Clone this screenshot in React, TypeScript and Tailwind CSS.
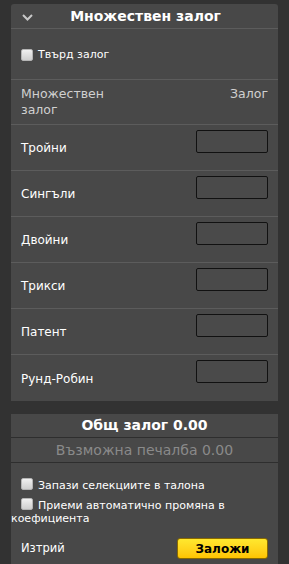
import React from 'react'

const font = { fontFamily: '"DejaVu Sans", Verdana, sans-serif' }

const rows = ['Тройни', 'Сингъли', 'Двойни', 'Трикси', 'Патент', 'Рунд-Робин']

function Box() {
  return (
    <span className="inline-block h-[12px] w-[12px] shrink-0 rounded-[2px] border border-[#b5b5b5] bg-gradient-to-b from-[#f0f0f0] to-[#cfcfcf] align-[-1px]" />
  )
}

export default function App() {
  return (
    <div className="min-h-[564px] bg-[#323232] pt-[4px] pl-[11px]" style={font}>
      {/* Multiple bet panel */}
      <div className="w-[267px] rounded-t-[3px] bg-[#484848]">
        <div className="relative flex h-[25px] items-center justify-center border-b border-[#5c5c5c]">
          <svg
            className="absolute left-[11px] top-[10px]"
            width="11"
            height="7"
            viewBox="0 0 11 7"
            fill="none"
            stroke="#c8c8c8"
            strokeWidth="2"
          >
            <path d="M1 1l4.5 4.5L10 1" />
          </svg>
          <span className="ml-[2px] text-[14px] font-bold leading-none text-white">Множествен залог</span>
        </div>

        <div className="flex h-[51px] items-center gap-[5px] border-b border-[#5c5c5c] pl-[10px] pt-[2px]">
          <Box />
          <span className="text-[11px] text-white">Твърд залог</span>
        </div>

        <div className="flex h-[45px] justify-between border-b border-[#5c5c5c] px-[10px] pt-[6px] text-[12.5px] leading-[16px] text-[#d0d0d0]">
          <span className="w-[100px]">Множествен залог</span>
          <span>Залог</span>
        </div>

        {rows.map((r, i) => (
          <div
            key={r}
            className={`flex h-[46px] justify-between px-[10px] ${i < rows.length - 1 ? 'border-b border-[#5c5c5c]' : ''}`}
          >
            <span className="self-center pt-[1px] text-[12px] text-white">{r}</span>
            <input className="mt-[5px] h-[23px] w-[72px] rounded-[2px] border border-[#111] bg-[#4a4a4a] outline-none" />
          </div>
        ))}
      </div>

      {/* Totals panel */}
      <div className="mt-[13px] w-[267px] bg-[#484848]">
        <div className="flex h-[24px] items-center justify-center border-b border-[#2e2e2e] text-[14px] font-bold text-white">
          Общ залог 0.00
        </div>
        <div className="flex h-[25px] items-center justify-center border-b border-[#2e2e2e] text-[14px] text-[#8a8a8a]">
          Възможна печалба 0.00
        </div>
        <div className="pt-[15px] text-[11px] leading-[13px] text-white">
          <div className="pb-[6px]">
            <span className="ml-[10px] mr-[5px]">
              <Box />
            </span>
            Запази селекциите в талона
          </div>
          <div>
            <span className="ml-[10px] mr-[5px]">
              <Box />
            </span>
            Приеми автоматично промяна в коефициента
          </div>
        </div>
        <div className="flex items-center justify-between px-[10px] pt-[13px] pb-[6px]">
          <span className="text-[11.5px] text-white">Изтрий</span>
          <button className="h-[21px] w-[91px] rounded-[3px] border border-[#8a6a00] bg-gradient-to-b from-[#ffe82e] to-[#ffc400] text-[12px] font-bold text-black">
            Заложи
          </button>
        </div>
      </div>
    </div>
  )
}
